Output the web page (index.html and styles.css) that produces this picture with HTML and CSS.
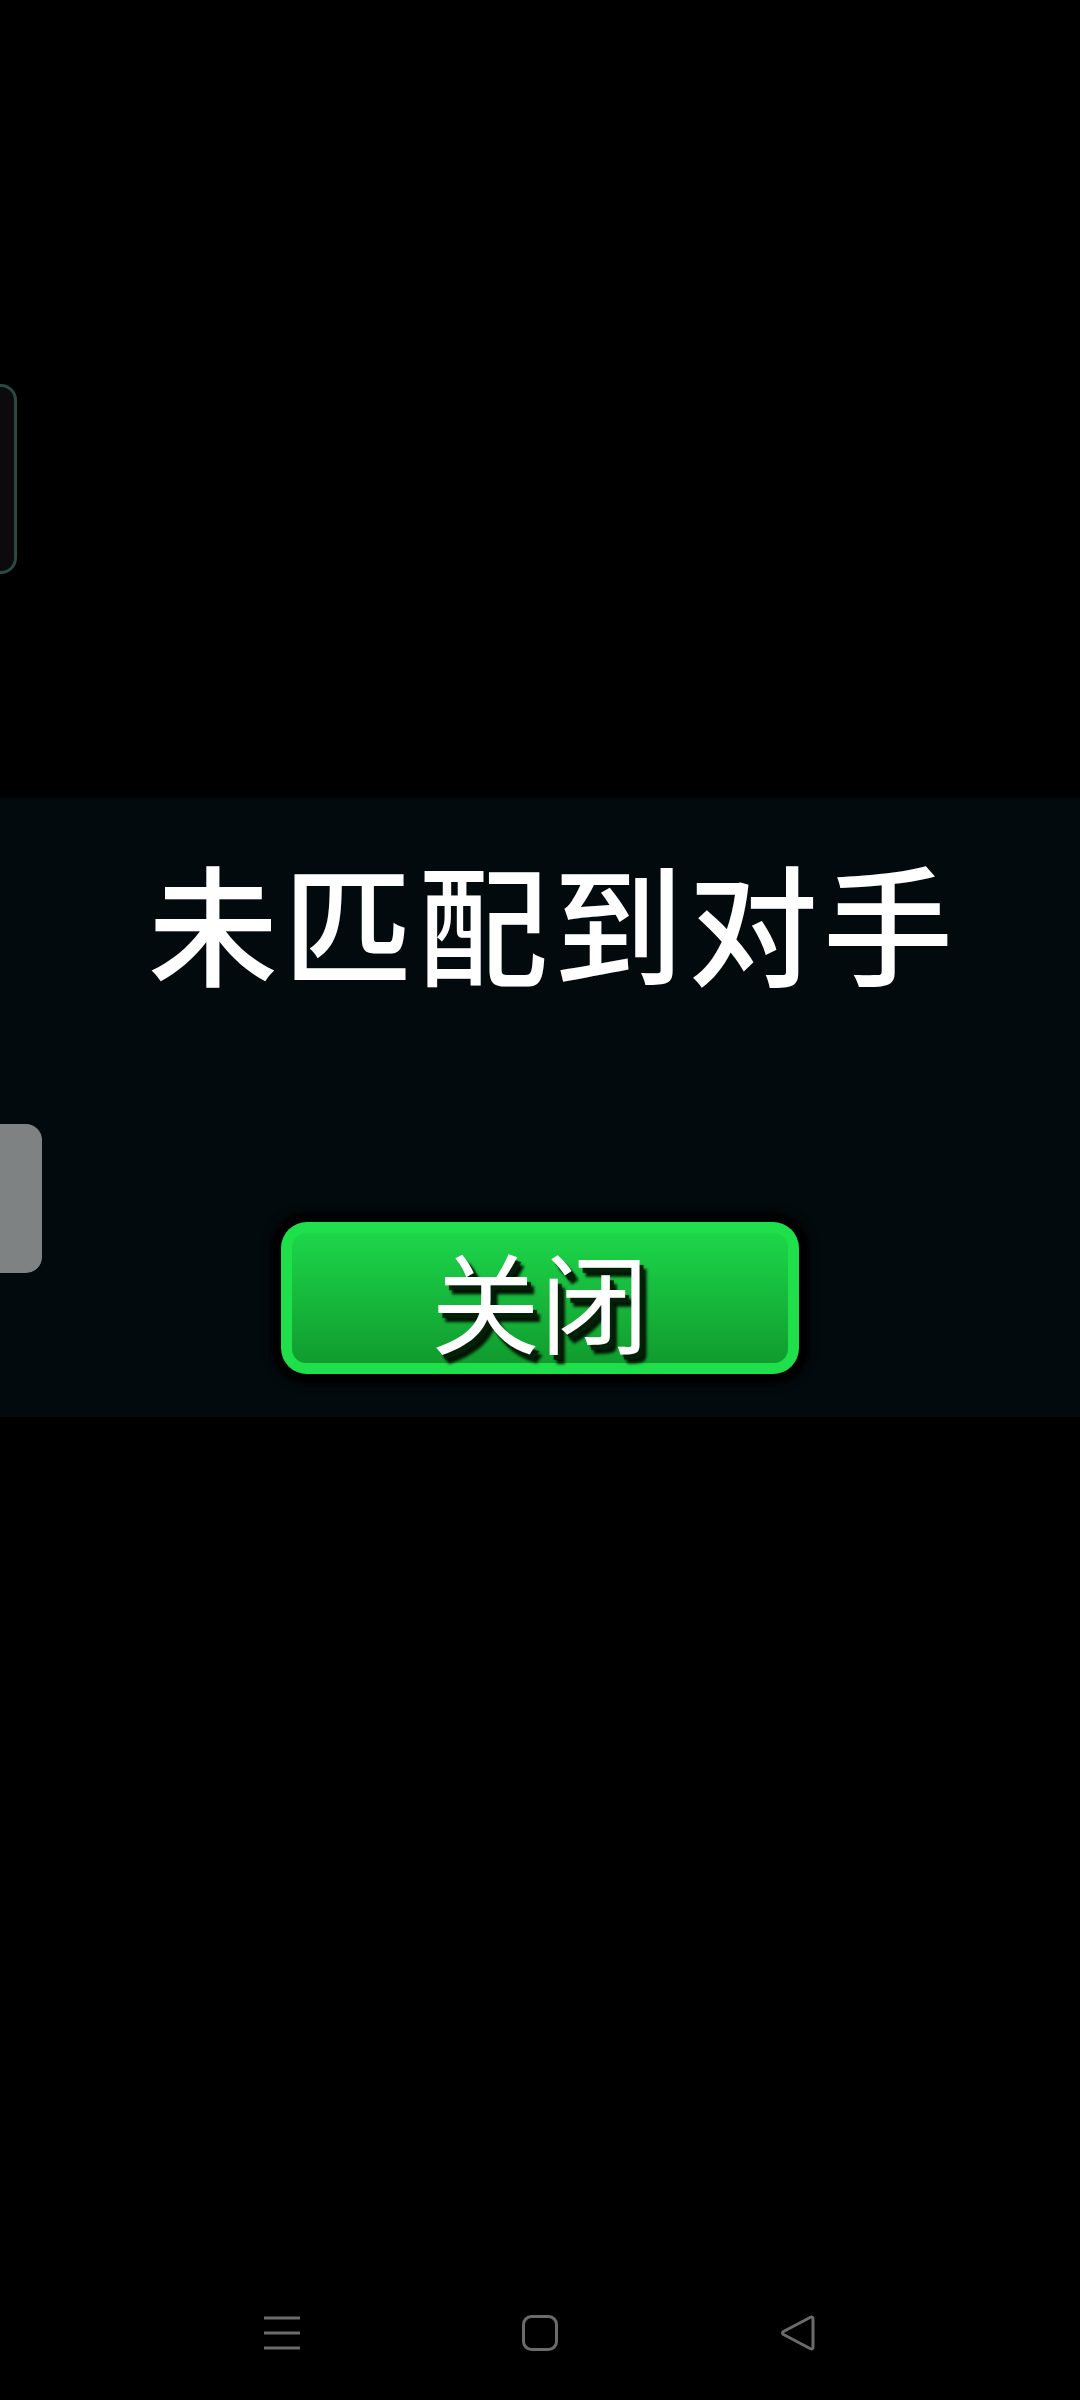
FILE: index.html
```html
<!DOCTYPE html>
<html lang="zh-CN">
<head>
    <meta charset="UTF-8">
    <meta name="viewport" content="width=device-width, initial-scale=1.0">
    <title>未匹配到对手</title>
    <link rel="stylesheet" href="styles.css">
</head>
<body>
    <div class="screen">
        <div class="backdrop">
            <div class="ghost-card"></div>
        </div>

        <div class="dialog">
            <div class="side-tab"></div>
            <h1 class="dialog-title">未匹配到对手</h1>
            <div class="btn-wrap">
                <button class="close-btn" type="button">
                    <span class="close-face">关闭</span>
                </button>
            </div>
        </div>

        <div class="filler"></div>

        <nav class="navbar">
            <span class="nav-item">
                <svg width="38" height="36" viewBox="0 0 38 36">
                    <path d="M1 3H37M1 18H37M1 33H37" stroke="#6b6b6b" stroke-width="3" fill="none"/>
                </svg>
            </span>
            <span class="nav-item">
                <svg width="36" height="36" viewBox="0 0 36 36">
                    <rect x="1.5" y="1.5" width="33" height="33" rx="8" stroke="#6b6b6b" stroke-width="3" fill="none"/>
                </svg>
            </span>
            <span class="nav-item">
                <svg width="36" height="36" viewBox="0 0 36 36">
                    <path d="M33 4.5V31.5Q33 35 30 33.5L3.5 19.5Q1.5 18 3.5 16.5L30 2.5Q33 1 33 4.5Z" stroke="#6b6b6b" stroke-width="3" fill="none" stroke-linejoin="round"/>
                </svg>
            </span>
        </nav>
    </div>
</body>
</html>
```

FILE: styles.css
```css
body {
    margin: 0;
    padding: 0;
    background-color: #000;
    font-family: 'Noto Sans CJK SC', 'Noto Sans', sans-serif;
    color: white;
}
.screen {
    width: 1080px;
    height: 2400px;
    display: flex;
    flex-direction: column;
    overflow: hidden;
}
.backdrop {
    height: 798px;
    flex-shrink: 0;
}
.ghost-card {
    width: 200px;
    height: 184px;
    margin-top: 384px;
    margin-left: -189px;
    border: 3px solid #2a4a40;
    border-radius: 16px;
    background-color: #0c0a0c;
}
.dialog {
    position: relative;
    height: 619px;
    flex-shrink: 0;
    background-color: #030a0d;
    display: flex;
    flex-direction: column;
    align-items: center;
}
.side-tab {
    position: absolute;
    left: -20px;
    top: 326px;
    width: 62px;
    height: 149px;
    border-radius: 16px;
    background-color: #7f8283;
}
.dialog-title {
    margin: 56px 0 0 0;
    padding-left: 26px;
    font-size: 130px;
    line-height: 130px;
    font-weight: 500;
    letter-spacing: 5px;
    color: #fff;
}
.btn-wrap {
    margin-top: 230px;
    padding: 8px;
    border-radius: 34px;
    background-color: #000;
    box-shadow: 0 0 8px 2px #000;
}
.close-btn {
    display: block;
    width: 518px;
    height: 152px;
    padding: 11px;
    border: none;
    border-radius: 26px;
    background-color: #1fe04a;
    cursor: pointer;
}
.close-face {
    display: flex;
    align-items: center;
    justify-content: center;
    height: 100%;
    border-radius: 14px;
    background: linear-gradient(#1dd64a, #109c2e);
    font-family: 'Noto Sans CJK SC', 'Noto Sans', sans-serif;
    font-size: 109px;
    line-height: 1;
    color: #fff;
    text-shadow: 4px 5px 1px #052008, 7px 9px 3px #031405;
}
.filler {
    flex: 1;
}
.navbar {
    height: 134px;
    flex-shrink: 0;
    display: grid;
    grid-template-columns: 258px 258px 258px;
    justify-content: center;
    align-items: center;
}
.nav-item {
    display: flex;
    justify-content: center;
    align-items: center;
}
.nav-item svg {
    display: block;
}
```
